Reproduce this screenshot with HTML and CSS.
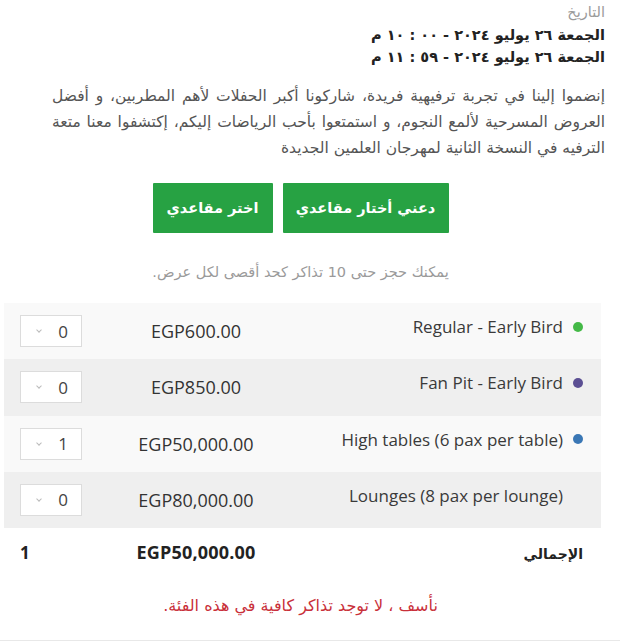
FILE: index.html
```html
<!DOCTYPE html>
<html lang="ar" dir="rtl">
<head>
<meta charset="utf-8">
<link rel="stylesheet" href="styles.css">
</head>
<body>
<div class="page">
  <div class="dates">
    <div class="label">التاريخ</div>
    <div class="date">الجمعة ٢٦ يوليو ٢٠٢٤ - ٠٠ : ١٠ م</div>
    <div class="date">الجمعة ٢٦ يوليو ٢٠٢٤ - ٥٩ : ١١ م</div>
  </div>
  <p class="desc">إنضموا إلينا في تجربة ترفيهية فريدة، شاركونا أكبر الحفلات لأهم المطربين، و أفضل العروض المسرحية لألمع النجوم، و استمتعوا بأحب الرياضات إليكم، إكتشفوا معنا متعة الترفيه في النسخة الثانية لمهرجان العلمين الجديدة</p>
  <div class="actions">
    <button class="btn btn-wide">دعني أختار مقاعدي</button>
    <button class="btn btn-narrow">اختر مقاعدي</button>
  </div>
  <div class="note">يمكنك حجز حتى 10 تذاكر كحد أقصى لكل عرض.</div>
  <div class="tickets">
    <div class="row light">
      <div class="name"><span class="dot green"></span><span class="lat">Regular - Early Bird</span></div>
      <div class="price lat">EGP600.00</div>
      <div class="qty"><div class="select"><span class="val lat">0</span><span class="chev"></span></div></div>
    </div>
    <div class="row dark">
      <div class="name"><span class="dot purple"></span><span class="lat">Fan Pit - Early Bird</span></div>
      <div class="price lat">EGP850.00</div>
      <div class="qty"><div class="select"><span class="val lat">0</span><span class="chev"></span></div></div>
    </div>
    <div class="row light">
      <div class="name"><span class="dot blue"></span><span class="lat">High tables (6 pax per table)</span></div>
      <div class="price lat">EGP50,000.00</div>
      <div class="qty"><div class="select"><span class="val lat">1</span><span class="chev"></span></div></div>
    </div>
    <div class="row dark">
      <div class="name"><span class="dot none"></span><span class="lat">Lounges (8 pax per lounge)</span></div>
      <div class="price lat">EGP80,000.00</div>
      <div class="qty"><div class="select"><span class="val lat">0</span><span class="chev"></span></div></div>
    </div>
  </div>
  <div class="total">
    <div class="tname">الإجمالي</div>
    <div class="tprice lat">EGP50,000.00</div>
    <div class="tqty lat">1</div>
  </div>
  <div class="error">نأسف ، لا توجد تذاكر كافية في هذه الفئة.</div>
</div>
</body>
</html>
```
FILE: styles.css
```css
html, body {
  margin: 0;
  padding: 0;
  background: #fff;
}
body {
  font-family: "DejaVu Sans", "Noto Sans", sans-serif;
  width: 620px;
  height: 641px;
  overflow: hidden;
  border-bottom: 1px solid #e8e8e8;
  box-sizing: border-box;
}
.page {
  width: 601px;
  margin-right: 19px;
}
.lat {
  font-family: "Open Sans", "Noto Sans", sans-serif;
}
.dates {
  margin-right: -4px;
  margin-top: 0;
}
.label {
  font-size: 14.5px;
  color: #9a9a9a;
  line-height: 24px;
}
.date {
  font-size: 14.5px;
  font-weight: bold;
  color: #222;
  line-height: 22px;
}
.desc {
  margin: 15px -4px 0 52px;
  font-size: 15.5px;
  line-height: 26px;
  color: #555;
  text-align: justify;
}
.actions {
  display: flex;
  justify-content: center;
  gap: 10px;
  margin-top: 22px;
}
.btn {
  font-family: "DejaVu Sans", sans-serif;
  background: #27a243;
  color: #fff;
  border: none;
  height: 50px;
  padding: 0;
  font-size: 14.5px;
  font-weight: bold;
  white-space: nowrap;
  border-radius: 1px;
}
.btn-wide { width: 166px; }
.btn-narrow { width: 120px; }
.note {
  text-align: center;
  color: #9a9a9a;
  font-size: 14.5px;
  margin-top: 29px;
  line-height: 20px;
}
.tickets {
  margin: 21px 0 0 4px;
}
.row, .total {
  display: flex;
  align-items: center;
  padding: 0 18px 0 16px;
  box-sizing: border-box;
}
.row {
  height: 56.25px;
}
.light { background: #f9f9f9; }
.dark { background: #efefef; }
.name, .tname {
  flex: 1;
  display: flex;
  align-items: center;
  gap: 10px;
  color: #333;
}
.name {
  font-size: 17px;
  margin-top: -9px;
}
.name .lat { color: #3a3a3a; }
.dot {
  width: 10px;
  height: 10px;
  border-radius: 50%;
  flex: none;
}
.green { background: #44b947; }
.purple { background: #5b4f93; }
.blue { background: #3a77b5; }
.none { background: transparent; }
.price, .tprice {
  width: 228px;
  text-align: center;
  color: #333;
}
.price {
  font-size: 18px;
}
.qty, .tqty {
  width: 62px;
}
.select {
  width: 62px;
  height: 32px;
  box-sizing: border-box;
  border: 1px solid #dcdcdc;
  background: #fff;
  display: flex;
  align-items: center;
  justify-content: space-between;
  padding: 0 13px 0 16px;
}
.val {
  font-size: 17px;
  color: #444;
}
.chev {
  width: 3px;
  height: 3px;
  border-right: 1px solid #bbb;
  border-bottom: 1px solid #bbb;
  transform: rotate(45deg);
  margin-top: -2px;
}
.total {
  height: 48px;
  margin: 0 0 0 4px;
  padding-top: 0;
}
.tname {
  font-weight: bold;
  font-size: 14px;
  color: #222;
  padding-top: 4px;
}
.tprice {
  font-weight: bold;
  font-size: 18px;
  letter-spacing: 0.2px;
  color: #222;
}
.tqty {
  font-weight: bold;
  font-size: 17px;
  color: #222;
  text-align: left;
}
.error {
  text-align: center;
  color: #c9303a;
  font-size: 16px;
  margin-top: 19px;
  line-height: 22px;
}
```
